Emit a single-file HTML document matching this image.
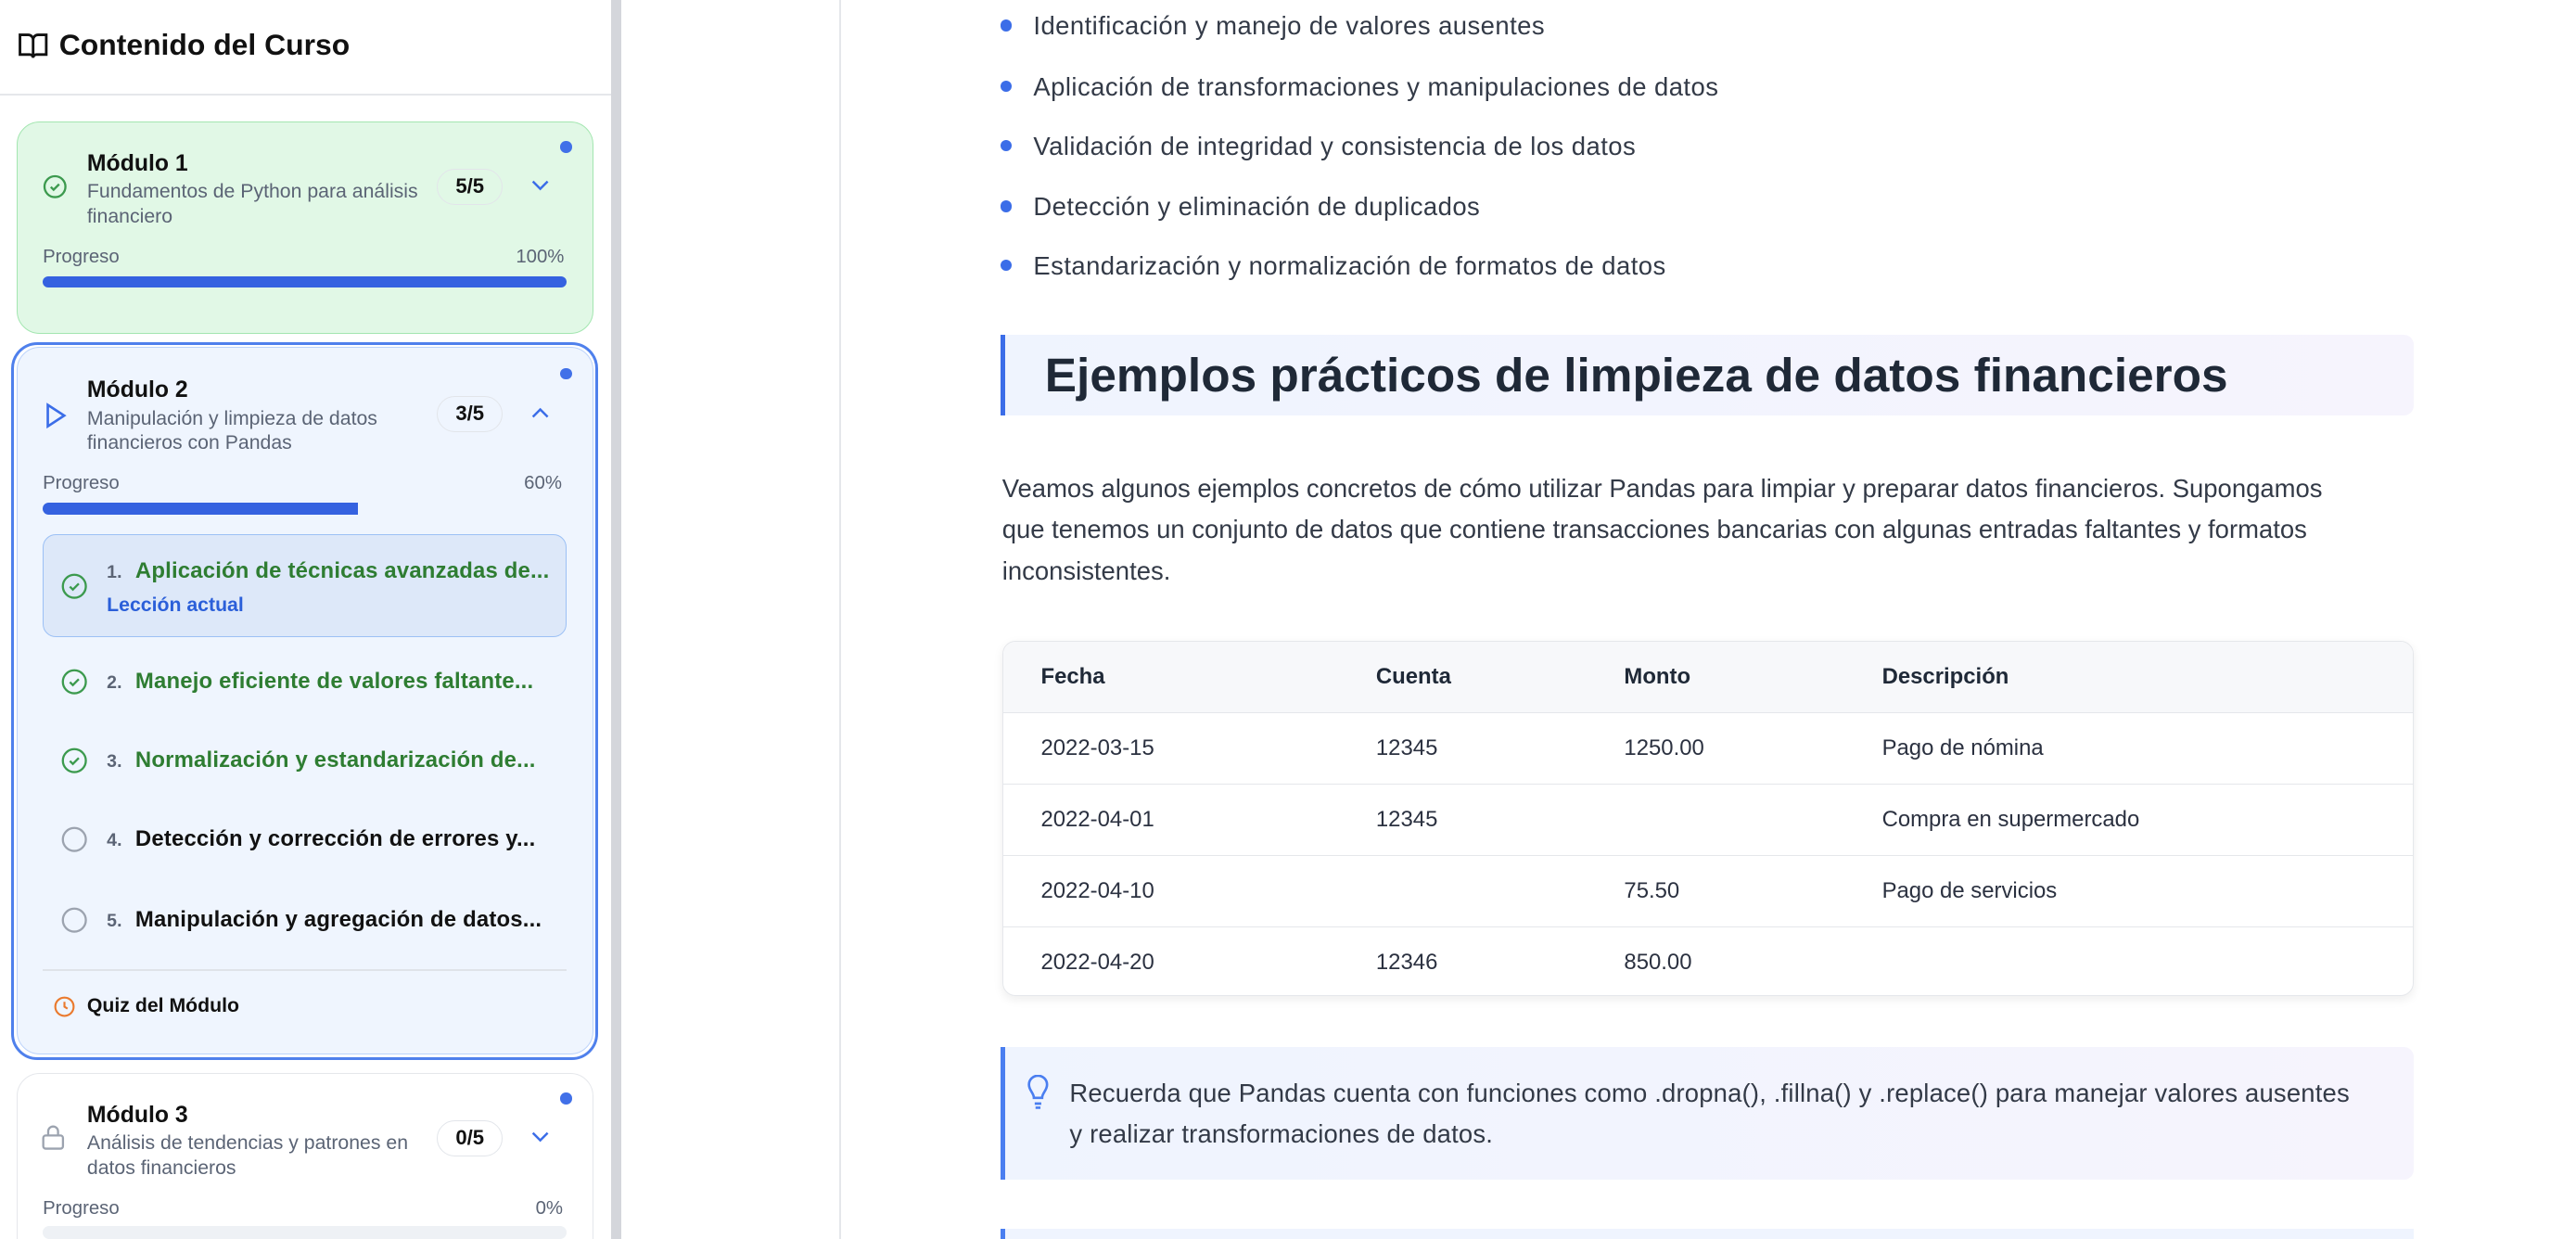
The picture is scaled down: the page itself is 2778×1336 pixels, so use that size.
<!DOCTYPE html>
<html><head><meta charset="utf-8"><style>
*{box-sizing:border-box;margin:0;padding:0}
html,body{width:2778px;height:1336px;overflow:hidden;background:#fff}
#z{zoom:1.7717;width:1568px;height:754px;position:relative;font-family:"Liberation Sans",sans-serif;color:#1f2937}
.abs{position:absolute}
.side{left:0;top:0;width:372px;height:754px;background:#fff}
.sb{left:372px;top:0;width:6px;height:754px;background:#d4d6db}
.card{position:absolute;border-radius:14px}
.mt{font-size:14px;font-weight:bold;color:#111}
.ms{font-size:12px;color:#5b6475;line-height:15px}
.badge{position:absolute;border:1px solid #e2e5ea;border-radius:12px;font-size:12.5px;font-weight:bold;width:40px;height:22px;text-align:center;line-height:20px;color:#111}
.dot{position:absolute;width:7px;height:7px;border-radius:50%;background:#4170e8}
.pl{position:absolute;font-size:11.5px;color:#5b6475}
.bar{position:absolute;height:7px;border-radius:4px;background:#3562e0}
.les{position:absolute;left:37px;font-size:13.5px;font-weight:bold;letter-spacing:.1px}
.les .n{color:#5b6475;font-size:11px;margin-right:8px}
.bul{position:absolute;left:610px;font-size:15.5px;color:#333a47;letter-spacing:.25px}
.bul:before{content:"";position:absolute;left:-1px;top:5px;width:7px;height:7px;border-radius:50%;background:#3b6de8}
.bul span{margin-left:19px}
td{font-size:13.5px;color:#2b3140;height:43.5px;border-top:1px solid #e5e7eb;padding-left:23px}
th{font-size:13.5px;text-align:left;padding-left:23px;height:43px;background:#f7f8fa;color:#1f2937}
</style></head><body><div id="z">
<div class="abs side"></div><div class="abs sb"></div>
<svg class="abs" style="left:10px;top:19px" width="20" height="18" viewBox="0 0 20 18" fill="none" stroke="#111" stroke-width="1.6"><path d="M2 2h5a3 3 0 0 1 3 3v11a2 2 0 0 0-2-2H2zM18 2h-5a3 3 0 0 0-3 3v11a2 2 0 0 1 2-2h6z"/></svg>
<div class="abs" style="left:36px;top:17px;font-size:18px;font-weight:bold;color:#111">Contenido del Curso</div>
<div class="abs" style="left:0;top:57px;width:372px;height:1px;background:#e5e7eb"></div>

<div class="card" style="left:10px;top:74px;width:351px;height:129px;background:#e1f8e6;border:1px solid #a3e6b0"></div>
<svg class="abs" style="left:26px;top:106px" width="15" height="15" viewBox="0 0 16 16" fill="none" stroke="#3c9a4e" stroke-width="1.4"><circle cx="8" cy="8" r="6.8"/><path d="M5.3 8.2l1.8 1.8 3.6-3.6"/></svg>
<div class="abs mt" style="left:53px;top:92px">Módulo 1</div>
<div class="abs ms" style="left:53px;top:109px;width:210px">Fundamentos de Python para análisis financiero</div>
<div class="badge" style="left:266px;top:103px;background:#e1f8e6">5/5</div>
<svg class="abs" style="left:323px;top:109px" width="12" height="8" viewBox="0 0 12 8" fill="none" stroke="#3b6de8" stroke-width="1.4"><path d="M1.5 1.5l4.5 4.5 4.5-4.5"/></svg>
<div class="dot" style="left:341px;top:86px"></div>
<div class="pl" style="left:26px;top:150px">Progreso</div><div class="pl" style="left:314px;top:150px">100%</div>
<div class="bar" style="left:26px;top:168px;width:319px"></div>

<div class="card" style="left:7px;top:208px;width:357px;height:437px;border:2px solid #4f80ec;border-radius:16px"></div>
<div class="card" style="left:10px;top:211px;width:351px;height:431px;background:#eff5fe;border:1px solid #bcd3fb"></div>
<svg class="abs" style="left:27px;top:245px" width="14" height="16" viewBox="0 0 14 16" fill="none" stroke="#3b6de8" stroke-width="1.5"><path d="M2 1.5l10 6.5-10 6.5z"/></svg>
<div class="abs mt" style="left:53px;top:230px">Módulo 2</div>
<div class="abs ms" style="left:53px;top:247px;width:200px">Manipulación y limpieza de datos financieros con Pandas</div>
<div class="badge" style="left:266px;top:241px">3/5</div>
<svg class="abs" style="left:323px;top:247px" width="12" height="8" viewBox="0 0 12 8" fill="none" stroke="#3b6de8" stroke-width="1.4"><path d="M1.5 6.5l4.5-4.5 4.5 4.5"/></svg>
<div class="dot" style="left:341px;top:224px"></div>
<div class="pl" style="left:26px;top:288px">Progreso</div><div class="pl" style="left:319px;top:288px">60%</div>
<div class="bar" style="left:26px;top:306px;width:192px;border-radius:4px 0 0 4px"></div>
<div class="card" style="left:26px;top:325px;width:319px;height:63px;background:#dde8f9;border:1px solid #9cc0f5;border-radius:8px"></div>
<svg class="abs" style="left:37px;top:349px" width="16" height="16" viewBox="0 0 16 16" fill="none" stroke="#3c9a4e" stroke-width="1.3"><circle cx="8" cy="8" r="7"/><path d="M5.3 8.2l1.8 1.8 3.6-3.6"/></svg>
<div class="les" style="left:65px;top:340px;color:#2e7d32"><span class="n">1.</span>Aplicación de técnicas avanzadas de...</div>
<div class="abs" style="left:65px;top:361px;font-size:12px;font-weight:bold;color:#2b5fd9">Lección actual</div>
<svg class="abs" style="left:37px;top:407px" width="16" height="16" viewBox="0 0 16 16" fill="none" stroke="#3c9a4e" stroke-width="1.3"><circle cx="8" cy="8" r="7"/><path d="M5.3 8.2l1.8 1.8 3.6-3.6"/></svg>
<div class="les" style="left:65px;top:407px;color:#2e7d32"><span class="n">2.</span>Manejo eficiente de valores faltante...</div>
<svg class="abs" style="left:37px;top:455px" width="16" height="16" viewBox="0 0 16 16" fill="none" stroke="#3c9a4e" stroke-width="1.3"><circle cx="8" cy="8" r="7"/><path d="M5.3 8.2l1.8 1.8 3.6-3.6"/></svg>
<div class="les" style="left:65px;top:455px;color:#2e7d32"><span class="n">3.</span>Normalización y estandarización de...</div>
<svg class="abs" style="left:37px;top:503px" width="16" height="16" viewBox="0 0 16 16" fill="none" stroke="#9ca3af" stroke-width="1.3"><circle cx="8" cy="8" r="7"/></svg>
<div class="les" style="left:65px;top:503px;color:#111"><span class="n">4.</span>Detección y corrección de errores y...</div>
<svg class="abs" style="left:37px;top:552px" width="16" height="16" viewBox="0 0 16 16" fill="none" stroke="#9ca3af" stroke-width="1.3"><circle cx="8" cy="8" r="7"/></svg>
<div class="les" style="left:65px;top:552px;color:#111"><span class="n">5.</span>Manipulación y agregación de datos...</div>
<div class="abs" style="left:26px;top:590px;width:319px;height:1px;background:#dfe3e9"></div>
<svg class="abs" style="left:33px;top:606px" width="13" height="13" viewBox="0 0 14 14" fill="none" stroke="#ea7a2e" stroke-width="1.3"><circle cx="7" cy="7" r="6"/><path d="M7 3.8V7l2 1.3"/></svg>
<div class="abs" style="left:53px;top:605px;font-size:12px;font-weight:bold;color:#111">Quiz del Módulo</div>

<div class="card" style="left:10px;top:653px;width:351px;height:120px;background:#fff;border:1px solid #e5e7eb"></div>
<svg class="abs" style="left:25px;top:684px" width="15" height="16" viewBox="0 0 15 16" fill="none" stroke="#9ca3af" stroke-width="1.3"><rect x="1.5" y="7" width="12" height="8" rx="1.5"/><path d="M4.5 7V4.5a3 3 0 0 1 6 0V7"/></svg>
<div class="abs mt" style="left:53px;top:671px">Módulo 3</div>
<div class="abs ms" style="left:53px;top:688px;width:210px">Análisis de tendencias y patrones en datos financieros</div>
<div class="badge" style="left:266px;top:682px">0/5</div>
<svg class="abs" style="left:323px;top:688px" width="12" height="8" viewBox="0 0 12 8" fill="none" stroke="#3b6de8" stroke-width="1.4"><path d="M1.5 1.5l4.5 4.5 4.5-4.5"/></svg>
<div class="dot" style="left:341px;top:665px"></div>
<div class="pl" style="left:26px;top:729px">Progreso</div><div class="pl" style="left:326px;top:729px">0%</div>
<div class="abs" style="left:26px;top:746px;width:319px;height:8px;background:#eef1f5;border-radius:4px"></div>

<div class="abs" style="left:511px;top:0;width:1px;height:754px;background:#e5e7eb"></div>
<div class="bul" style="top:7px"><span>Identificación y manejo de valores ausentes</span></div>
<div class="bul" style="top:44px"><span>Aplicación de transformaciones y manipulaciones de datos</span></div>
<div class="bul" style="top:80px"><span>Validación de integridad y consistencia de los datos</span></div>
<div class="bul" style="top:117px"><span>Detección y eliminación de duplicados</span></div>
<div class="bul" style="top:153px"><span>Estandarización y normalización de formatos de datos</span></div>

<div class="abs" style="left:609px;top:204px;width:860px;height:49px;background:linear-gradient(90deg,#eff4fe,#f6f4fd);border-left:3px solid #3b6de8;border-radius:0 6px 6px 0"></div>
<div class="abs" style="left:636px;top:211px;font-size:29px;font-weight:bold;color:#1f2937">Ejemplos prácticos de limpieza de datos financieros</div>

<div class="abs" style="left:610px;top:285px;width:825px;font-size:15.5px;line-height:25px;color:#333a47">Veamos algunos ejemplos concretos de cómo utilizar Pandas para limpiar y preparar datos financieros. Supongamos que tenemos un conjunto de datos que contiene transacciones bancarias con algunas entradas faltantes y formatos inconsistentes.</div>

<div class="abs" style="left:610px;top:390px;width:859px;height:216px;border:1px solid #e5e7eb;border-radius:8px;overflow:hidden;box-shadow:0 2px 6px rgba(0,0,0,.07)">
<table style="border-collapse:collapse;width:100%">
<tr><th style="width:204px">Fecha</th><th style="width:151px">Cuenta</th><th style="width:157px">Monto</th><th>Descripción</th></tr>
<tr><td>2022-03-15</td><td>12345</td><td>1250.00</td><td>Pago de nómina</td></tr>
<tr><td>2022-04-01</td><td>12345</td><td></td><td>Compra en supermercado</td></tr>
<tr><td>2022-04-10</td><td></td><td>75.50</td><td>Pago de servicios</td></tr>
<tr><td>2022-04-20</td><td>12346</td><td>850.00</td><td></td></tr>
</table></div>

<div class="abs" style="left:609px;top:637px;width:860px;height:81px;background:linear-gradient(90deg,#eff4fe,#f6f4fd);border-left:3px solid #4a7ef0;border-radius:0 6px 6px 0"></div>
<svg class="abs" style="left:625px;top:654px" width="14" height="22" viewBox="0 0 14 22" fill="none" stroke="#4a7ef0" stroke-width="1.5"><path d="M4.5 14c0-3-3-4.5-3-8a5.5 5.5 0 0 1 11 0c0 3.5-3 5-3 8z"/><path d="M5 17.5h4M5.5 20h3"/></svg>
<div class="abs" style="left:651px;top:653px;width:790px;font-size:15.5px;line-height:25px;color:#333a47;letter-spacing:.1px">Recuerda que Pandas cuenta con funciones como .dropna(), .fillna() y .replace() para manejar valores ausentes y realizar transformaciones de datos.</div>
<div class="abs" style="left:609px;top:748px;width:860px;height:10px;background:#eff4fe;border-left:3px solid #4a7ef0"></div>
</div></body></html>
